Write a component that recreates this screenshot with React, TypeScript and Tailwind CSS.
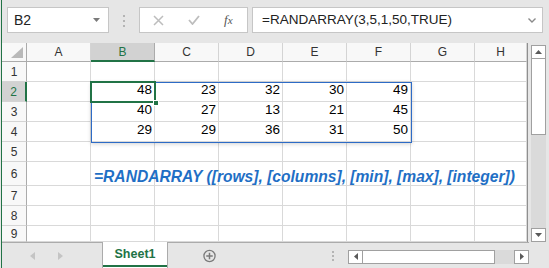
import React from "react";

const font = { fontFamily: '"Liberation Sans", Arial, sans-serif' };

const cols = ["A", "B", "C", "D", "E", "F", "G", "H"];
const colW = ["w-[64px]", "w-[64px]", "w-[64px]", "w-[64px]", "w-[64px]", "w-[64px]", "w-[64px]", "w-[52px]"];
const rowH = ["h-[20px]", "h-[20px]", "h-[20px]", "h-[20px]", "h-[20px]", "h-[24px]", "h-[20px]", "h-[20px]", "h-[16px]"];
const data: Record<number, string[]> = {
  2: ["", "48", "23", "32", "30", "49", "", ""],
  3: ["", "40", "27", "13", "21", "45", "", ""],
  4: ["", "29", "29", "36", "31", "50", "", ""],
};

function Toolbar() {
  return (
    <div className="h-[43px] flex items-start pt-[7px]">
      <div className="ml-[5px] w-[102px] h-[26px] bg-white border border-[#c6c6c6] flex items-center justify-between pl-[6px] pr-[8px]">
        <span className="text-[14px] text-[#222]">B2</span>
        <svg width="7" height="4" viewBox="0 0 7 4"><path d="M0 0h7L3.5 4z" fill="#7a7a7a" /></svg>
      </div>
      <div className="ml-[14px] mt-[8px] flex flex-col gap-[3px]">
        <div className="w-[2px] h-[2px] bg-[#b4b4b4]" />
        <div className="w-[2px] h-[2px] bg-[#b4b4b4]" />
        <div className="w-[2px] h-[2px] bg-[#b4b4b4]" />
      </div>
      <div className="ml-[14px] w-[109px] h-[26px] bg-white border border-[#c6c6c6] flex items-center pl-[13px]">
        <svg width="11" height="11" viewBox="0 0 11 11"><path d="M1 1l9 9M10 1l-9 9" stroke="#bdbdbd" strokeWidth="1.5" /></svg>
        <svg className="ml-[24px]" width="12" height="10" viewBox="0 0 12 10"><path d="M1 5l3.5 4L11 1" stroke="#bdbdbd" strokeWidth="1.8" fill="none" /></svg>
        <span className="ml-[24px] text-[13px] italic text-[#555]" style={{ fontFamily: '"Liberation Serif", serif' }}>
          <i>f</i><span className="text-[11px]">x</span>
        </span>
      </div>
      <div className="ml-[4px] w-[291px] h-[26px] bg-white border border-[#c6c6c6] flex items-center justify-between pl-[9px] pr-[6px]">
        <span className="text-[13.5px] text-[#222]">=RANDARRAY(3,5,1,50,TRUE)</span>
        <svg width="8" height="5" viewBox="0 0 8 5"><path d="M0.5 0.5L4 4l3.5-3.5" stroke="#8a8a8a" strokeWidth="1.4" fill="none" /></svg>
      </div>
    </div>
  );
}

function Grid() {
  return (
    <div className="relative flex flex-col w-[526px] border-r border-[#8f8f8f]">
      <div className="flex h-[19px] bg-[#f8f8f8]">
        <div className="w-[25px] h-full border-r border-b border-[#ababab] flex items-end justify-end pr-[3px] pb-[3px]">
          <svg width="12" height="11" viewBox="0 0 12 11"><path d="M12 0V11H0z" fill="#b9b9b9" /></svg>
        </div>
        {cols.map((c, i) => (
          <div
            key={c}
            className={`${colW[i]} h-full flex items-center justify-center text-[12px] ${
              c === "B"
                ? "bg-[#d2d2d2] text-[#217346] border-b-2 border-b-[#217346] border-r border-r-[#ababab]"
                : "text-[#333] border-b border-b-[#ababab] border-r border-r-[#d4d4d4]"
            }`}
          >
            {c}
          </div>
        ))}
      </div>
      {rowH.map((h, r) => {
        const rn = r + 1;
        const vals = data[rn];
        return (
          <div key={rn} className={`flex ${h} overflow-hidden`}>
            <div
              className={`w-[25px] h-full flex items-center justify-center text-[12px] border-b border-b-[#d4d4d4] ${
                rn === 2
                  ? "bg-[#d2d2d2] text-[#217346] border-r-2 border-r-[#217346]"
                  : "bg-[#f8f8f8] text-[#333] border-r border-r-[#ababab]"
              }`}
            >
              {rn}
            </div>
            {cols.map((c, i) => (
              <div
                key={c}
                className={`${colW[i]} h-full border-r border-b border-[#d9d9d9] bg-white flex items-end justify-end pr-[2px] pb-[1px] text-[13.5px] text-black relative`}
              >
                {vals ? vals[i] : ""}
                {rn === 6 && c === "B" && (
                  <span className="absolute left-[3px] top-[3px] whitespace-nowrap text-[15.6px] font-bold italic text-[#1f6fc5] z-10">
                    =RANDARRAY ([rows], [columns], [min], [max], [integer])
                  </span>
                )}
              </div>
            ))}
          </div>
        );
      })}
      <div className="absolute left-[89px] top-[39px] w-[321px] h-[61px] border border-[#2d6bc6] shadow-[0_1px_4px_rgba(0,0,0,0.18)] pointer-events-none" />
      <div className="absolute left-[88px] top-[38px] w-[66px] h-[22px] border-2 border-[#217346] pointer-events-none" />
      <div className="absolute left-[151px] top-[57px] w-[6px] h-[6px] bg-[#217346] border border-white pointer-events-none" />
    </div>
  );
}

function VScroll() {
  return (
    <div className="ml-[3px] w-[15px] flex flex-col pt-[2px]">
      <div className="h-[14px] bg-white border border-[#a0a0a0] flex items-center justify-center">
        <svg width="7" height="4" viewBox="0 0 7 4"><path d="M0 4h7L3.5 0z" fill="#5a5a5a" /></svg>
      </div>
      <div className="h-[76px] bg-white border border-t-0 border-[#a0a0a0]" />
      <div className="h-[93px] bg-[#dadada]" />
      <div className="h-[14px] bg-white border border-[#a0a0a0] flex items-center justify-center">
        <svg width="7" height="4" viewBox="0 0 7 4"><path d="M0 0h7L3.5 4z" fill="#5a5a5a" /></svg>
      </div>
    </div>
  );
}

function TabBar() {
  return (
    <div className="h-[26px] flex">
      <div className="w-[100px] h-full border-t border-[#ababab] flex items-center pl-[28px] gap-[23px]">
        <svg width="5" height="8" viewBox="0 0 5 8"><path d="M5 0v8L0 4z" fill="#c4c4c4" /></svg>
        <svg width="5" height="8" viewBox="0 0 5 8"><path d="M0 0v8l5-4z" fill="#c4c4c4" /></svg>
      </div>
      <div className="w-[66px] h-full bg-white border-x border-[#ababab] flex flex-col">
        <div className="flex-1 flex items-center justify-center text-[12.5px] font-bold text-[#217346] pt-[1px]">Sheet1</div>
        <div className="h-[2px] mb-[1px] bg-[#217346]" />
      </div>
      <div className="w-[361px] h-full border-t border-[#ababab] flex items-center">
        <svg className="ml-[35px] mt-[1px]" width="14" height="14" viewBox="0 0 14 14">
          <circle cx="7" cy="7" r="6" stroke="#7a7a7a" strokeWidth="1.4" fill="none" />
          <path d="M7 3.5v7M3.5 7h7" stroke="#7a7a7a" strokeWidth="1.6" />
        </svg>
        <div className="ml-[116px] flex flex-col gap-[2px]">
          <div className="w-[2px] h-[2px] bg-[#b4b4b4]" />
          <div className="w-[2px] h-[2px] bg-[#b4b4b4]" />
          <div className="w-[2px] h-[2px] bg-[#b4b4b4]" />
        </div>
        <div className="ml-[14px] flex h-[14px] mt-[2px]">
          <div className="w-[15px] h-full bg-white border border-[#a0a0a0] flex items-center justify-center">
            <svg width="4" height="7" viewBox="0 0 4 7"><path d="M4 0v7L0 3.5z" fill="#5a5a5a" /></svg>
          </div>
          <div className="w-[132px] h-full bg-white border-y border-r border-[#a0a0a0]" />
          <div className="w-[19px] h-full bg-[#dadada]" />
          <div className="w-[15px] h-full bg-white border border-[#a0a0a0] flex items-center justify-center">
            <svg width="4" height="7" viewBox="0 0 4 7"><path d="M0 0v7l4-3.5z" fill="#5a5a5a" /></svg>
          </div>
        </div>
      </div>
    </div>
  );
}

export default function App() {
  return (
    <div className="w-[549px] h-[268px] overflow-hidden bg-[#e6e6e6] pl-px" style={font}>
      <div className="h-full border-l border-[#217346] flex flex-col">
        <Toolbar />
        <div className="flex h-[199px]">
          <Grid />
          <VScroll />
        </div>
        <TabBar />
      </div>
    </div>
  );
}
